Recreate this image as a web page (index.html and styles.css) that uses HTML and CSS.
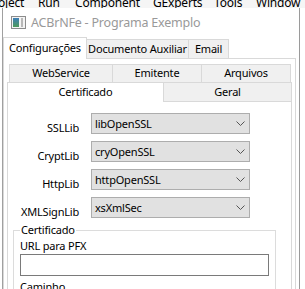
FILE: index.html
```html
<!DOCTYPE html>
<html lang="pt">
  <head>
    <meta charset="UTF-8" />
    <meta name="viewport" content="width=device-width, initial-scale=1.0" />
    <title>ACBrNFe - Programa Exemplo</title>
    <link rel="stylesheet" href="styles.css">
  </head>
  <body>
    <div class="ide-menu">
      <span style="width: 40px; margin-left: -2px">oject</span><span style="width: 37px">Run</span><span style="width: 78px">Component</span><span style="width: 61px">GExperts</span><span style="width: 42px">Tools</span><span>Window</span>
    </div>

    <div class="window">
      <div class="titlebar">
        <svg class="app-icon" width="15" height="13" viewBox="0 0 15 13">
          <defs>
            <linearGradient id="g" x1="0" y1="0" x2="0" y2="1">
              <stop offset="0" stop-color="#3f7fb8" />
              <stop offset="1" stop-color="#4d9a5a" />
            </linearGradient>
          </defs>
          <rect x="0.5" y="0.5" width="14" height="12" fill="#f4f4f4" stroke="#8c8c8c" />
          <rect x="2" y="2" width="6" height="9" fill="url(#g)" />
          <rect x="10" y="2" width="2" height="9" fill="#b8b8b8" />
        </svg>
        <span class="title-text">ACBrNFe - Programa Exemplo</span>
      </div>

      <div class="tabs outer-tabs">
        <div class="tab active" style="width: 84px">Configurações</div>
        <div class="tab" style="width: 103px">Documento Auxiliar</div>
        <div class="tab" style="width: 41px">Email</div>
      </div>

      <div class="sheet outer-sheet">
        <div class="tabs back-row">
          <div class="tab" style="width: 104px">WebService</div>
          <div class="tab" style="width: 90px">Emitente</div>
          <div class="tab" style="width: 90px">Arquivos</div>
        </div>
        <div class="tabs front-row">
          <div class="tab active" style="width: 157px">Certificado</div>
          <div class="tab" style="width: 129px">Geral</div>
        </div>

        <div class="sheet inner-sheet">
          <div class="lib-grid">
            <label class="lib-label">SSLLib</label>
            <div class="combo"><span>libOpenSSL</span><svg width="9" height="5" viewBox="0 0 9 5"><polyline points="0.5,0.5 4.5,4.5 8.5,0.5" fill="none" stroke="#555" /></svg></div>
            <label class="lib-label">CryptLib</label>
            <div class="combo"><span>cryOpenSSL</span><svg width="9" height="5" viewBox="0 0 9 5"><polyline points="0.5,0.5 4.5,4.5 8.5,0.5" fill="none" stroke="#555" /></svg></div>
            <label class="lib-label">HttpLib</label>
            <div class="combo"><span>httpOpenSSL</span><svg width="9" height="5" viewBox="0 0 9 5"><polyline points="0.5,0.5 4.5,4.5 8.5,0.5" fill="none" stroke="#555" /></svg></div>
            <label class="lib-label">XMLSignLib</label>
            <div class="combo"><span>xsXmlSec</span><svg width="9" height="5" viewBox="0 0 9 5"><polyline points="0.5,0.5 4.5,4.5 8.5,0.5" fill="none" stroke="#555" /></svg></div>
          </div>

          <fieldset class="group">
            <legend>Certificado</legend>
            <div class="field-label">URL para PFX</div>
            <div class="edit"></div>
            <div class="field-label">Caminho</div>
          </fieldset>
        </div>
      </div>
    </div>
  </body>
</html>
```

FILE: styles.css
```css
html,
body {
  margin: 0;
  width: 305px;
  height: 289px;
  overflow: hidden;
  background: #fff;
  font-family: "Noto Sans", sans-serif;
  font-size: 11px;
  letter-spacing: -0.2px;
  color: #000;
}
.ide-menu {
  height: 8px;
  overflow: hidden;
  background: #f5f5f5;
  white-space: nowrap;
  font-size: 12px;
  line-height: 8px;
}
.ide-menu span {
  display: inline-block;
  line-height: 16px;
  margin-top: -5px;
  vertical-align: top;
}
.window {
  margin-left: 2px;
  width: 296px;
  border-left: 1px solid #a0a0a0;
  border-right: 1px solid #9a9a9a;
  height: 281px;
  background: #fff;
}
.titlebar {
  height: 29px;
  display: flex;
  align-items: center;
  padding-left: 8px;
}
.app-icon {
  margin-right: 5px;
}
.title-text {
  color: #999;
  font-size: 12.5px;
}
.tabs {
  display: flex;
  align-items: flex-end;
  white-space: nowrap;
}
.tab {
  box-sizing: border-box;
  border: 1px solid #d9d9d9;
  border-bottom: none;
  background: #f0f0f0;
  text-align: center;
  margin-right: -1px;
}
.tab.active {
  background: #fff;
  position: relative;
  z-index: 1;
}
.outer-tabs {
  height: 21px;
}
.outer-tabs .tab {
  height: 19px;
  line-height: 17px;
}
.outer-tabs .tab.active {
  height: 22px;
  line-height: 20px;
  margin-bottom: -1px;
}
.sheet {
  border: 1px solid #d9d9d9;
  background: #fff;
}
.outer-sheet {
  width: 293px;
  box-sizing: border-box;
  height: 240px;
  padding: 5px 3px 0;
}
.back-row {
  padding-left: 2px;
}
.back-row .tab {
  height: 18px;
  line-height: 16px;
}
.front-row .tab {
  height: 19px;
  line-height: 18px;
}
.front-row .tab.active {
  height: 20px;
  line-height: 18px;
  margin-bottom: -1px;
}
.inner-sheet {
  width: 285px;
  box-sizing: border-box;
  height: 200px;
  padding: 11px 0 0 5px;
}
.lib-grid {
  display: grid;
  grid-template-columns: 66px 159px;
  column-gap: 12px;
  row-gap: 6px;
}
.lib-label {
  text-align: right;
  padding-top: 8px;
  line-height: 14px;
}
.combo {
  box-sizing: border-box;
  height: 21px;
  border: 1px solid #adadad;
  background: #e1e1e1;
  display: flex;
  align-items: center;
  justify-content: space-between;
  padding: 0 4px 0 3px;
}
.group {
  margin: 4px 0 0 0;
  width: 262px;
  box-sizing: border-box;
  border: 1px solid #dcdcdc;
  padding: 0 6px;
}
.group legend {
  padding: 0 1px;
  margin-left: 0;
  line-height: 14px;
}
.field-label {
  line-height: 16px;
  margin-top: 1px;
}
.edit {
  box-sizing: border-box;
  width: 249px;
  height: 22px;
  border: 1px solid #7a7a7a;
  background: #fff;
  margin: 0 0 3px;
}
```
